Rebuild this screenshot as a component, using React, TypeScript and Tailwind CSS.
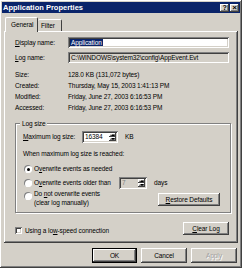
import React from 'react';

const raised = 'shadow-[inset_-1px_-1px_#404040,inset_1px_1px_#ffffff,inset_-2px_-2px_#808080,inset_2px_2px_#d4d0c8]';
const sunken = 'shadow-[inset_1px_1px_#808080,inset_-1px_-1px_#ffffff,inset_2px_2px_#404040,inset_-2px_-2px_#d4d0c8]';

const Btn = ({ children, className = '', disabled = false }: { children: React.ReactNode; className?: string; disabled?: boolean }) => (
  <div className={`bg-[#d4d0c8] ${raised} flex items-center justify-center shrink-0 ${disabled ? 'text-[#a0a0a0]' : 'text-black'} ${className}`}>
    {children}
  </div>
);

const Radio = ({ checked = false }: { checked?: boolean }) => (
  <div className="w-[8px] h-[8px] rounded-full bg-white shadow-[inset_1px_1px_#808080,inset_-1px_-1px_#ffffff] flex items-center justify-center shrink-0">
    {checked && <div className="w-[3px] h-[3px] rounded-full bg-black" />}
  </div>
);

const Spinner = ({ value, disabled = false, className = '' }: { value: string; disabled?: boolean; className?: string }) => (
  <div className={`h-[12px] flex shrink-0 ${disabled ? 'bg-[#d4d0c8] text-[#808080]' : 'bg-white'} ${sunken} p-[2px] ${className}`}>
    <div className="flex-1 leading-[8px] pl-[1px]">{value}</div>
    <div className="w-[7px] flex flex-col">
      <div className={`flex-1 bg-[#d4d0c8] ${raised} flex items-center justify-center`}>
        <div className="w-0 h-0 border-l-[2px] border-r-[2px] border-b-[2px] border-l-transparent border-r-transparent border-b-black" />
      </div>
      <div className={`flex-1 bg-[#d4d0c8] ${raised} flex items-center justify-center`}>
        <div className="w-0 h-0 border-l-[2px] border-r-[2px] border-t-[2px] border-l-transparent border-r-transparent border-t-black" />
      </div>
    </div>
  </div>
);

const InfoRow = ({ label, value }: { label: string; value: string }) => (
  <div className="flex h-[11px] items-center">
    <div className="w-[53px]">{label}</div>
    <div>{value}</div>
  </div>
);

const App = () => {
  return (
    <div
      className={`w-[242px] h-[268px] bg-[#d4d0c8] ${raised} p-[2px] flex flex-col text-[6.5px] tracking-[-0.1px] text-black overflow-hidden`}
      style={{ fontFamily: '"Liberation Sans", Arial, sans-serif' }}
    >
      <div className="h-[11px] shrink-0 bg-[#0a246a] flex items-center justify-between pl-[1px] pr-[1px]">
        <span className="text-white font-bold text-[7.5px] tracking-normal">Application Properties</span>
        <div className="flex">
          <Btn className="w-[9px] h-[8px] text-[7px] font-bold leading-none">?</Btn>
          <Btn className="w-[9px] h-[8px] text-[8px] font-bold leading-none ml-[1px]">×</Btn>
        </div>
      </div>

      <div className="flex items-end h-[18px] shrink-0 pl-[3px]">
        <div className="h-[15px] w-[33px] bg-[#d4d0c8] border-t border-l border-white border-r-[1.5px] border-r-[#404040] rounded-t-[2px] relative z-10 -mb-[1px] flex items-center pl-[5px] pb-[1px]">
          General
        </div>
        <div className="h-[12px] w-[24px] bg-[#d4d0c8] border-t border-white border-r border-r-[#404040] rounded-t-[2px] flex items-center pl-[3px]">
          Filter
        </div>
      </div>

      <div className={`mx-[2px] h-[212px] shrink-0 ${raised} pl-[11px] pr-[9px] pt-[6px] flex flex-col`}>
        <div className="flex items-center h-[11px]">
          <div className="w-[53px]"><span className="underline">D</span>isplay name:</div>
          <div className={`flex-1 h-[11px] bg-white ${sunken} flex items-center pl-[2px]`}>
            <span className="bg-[#0a246a] text-white px-[1px] leading-[7px]">Application</span>
          </div>
        </div>
        <div className="flex items-center h-[11px] mt-[4px]">
          <div className="w-[53px]"><span className="underline">L</span>og name:</div>
          <div className={`flex-1 h-[11px] ${sunken} flex items-center pl-[3px]`}>
            C:\WINDOWS\system32\config\AppEvent.Evt
          </div>
        </div>
        <div className="mt-[6px] flex flex-col">
          <InfoRow label="Size:" value="128.0 KB (131,072 bytes)" />
          <InfoRow label="Created:" value="Thursday, May 15, 2003 1:41:13 PM" />
          <InfoRow label="Modified:" value="Friday, June 27, 2003 6:16:53 PM" />
          <InfoRow label="Accessed:" value="Friday, June 27, 2003 6:16:53 PM" />
        </div>

        <div className="relative mt-[10px] -mr-[2px] h-[90px] shrink-0 border border-[#808080] shadow-[inset_1px_1px_#ffffff,1px_1px_#ffffff] pl-[7px] pt-[7px]">
          <span className="absolute -top-[5px] left-[4px] bg-[#d4d0c8] px-[2px] leading-[9px]">Log size</span>
          <div className="flex items-center h-[12px]">
            <div className="w-[59px]"><span className="underline">M</span>aximum log size:</div>
            <Spinner value="16384" className="w-[36px]" />
            <span className="ml-[7px]">KB</span>
          </div>
          <div className="mt-[6px] h-[10px] flex items-center">When maximum log size is reached:</div>
          <div className="flex items-center h-[10px] mt-[5px] pl-[1px]">
            <Radio checked />
            <span className="ml-[2px]">O<span className="underline">v</span>erwrite events as needed</span>
          </div>
          <div className="flex items-center h-[12px] mt-[3px] pl-[1px]">
            <Radio />
            <span className="ml-[2px] w-[85px]">O<span className="underline">v</span>erwrite events older than</span>
            <Spinner value="7" disabled className="w-[28px]" />
            <span className="ml-[7px]">days</span>
          </div>
          <div className="flex items-start mt-[1px] pl-[1px]">
            <div className="mt-[2px]"><Radio /></div>
            <div className="ml-[2px] leading-[8.5px] flex-1">
              Do <span className="underline">n</span>ot overwrite events
              <br />
              (clear log manually)
            </div>
            <Btn className="w-[62px] h-[13px] mt-[3px] mr-[10px]"><span><span className="underline">R</span>estore Defaults</span></Btn>
          </div>
        </div>

        <div className="flex items-center justify-between mt-[9px]">
          <div className="flex items-center mt-[4px]">
            <div className={`w-[7px] h-[7px] bg-white ${sunken}`} />
            <span className="ml-[3px]">Using a lo<span className="underline">w</span>-speed connection</span>
          </div>
          <Btn className="w-[46px] h-[13px]"><span><span className="underline">C</span>lear Log</span></Btn>
        </div>
      </div>

      <div className="flex justify-end gap-[4px] mt-[5px] pr-[3px]">
        <div className="w-[45px] h-[15px] border border-black">
          <Btn className="w-full h-full">OK</Btn>
        </div>
        <Btn className="w-[46px] h-[15px]">Cancel</Btn>
        <Btn disabled className="w-[46px] h-[15px]"><span className="[text-shadow:1px_1px_#ffffff]">Apply</span></Btn>
      </div>
    </div>
  );
};

export default App;
